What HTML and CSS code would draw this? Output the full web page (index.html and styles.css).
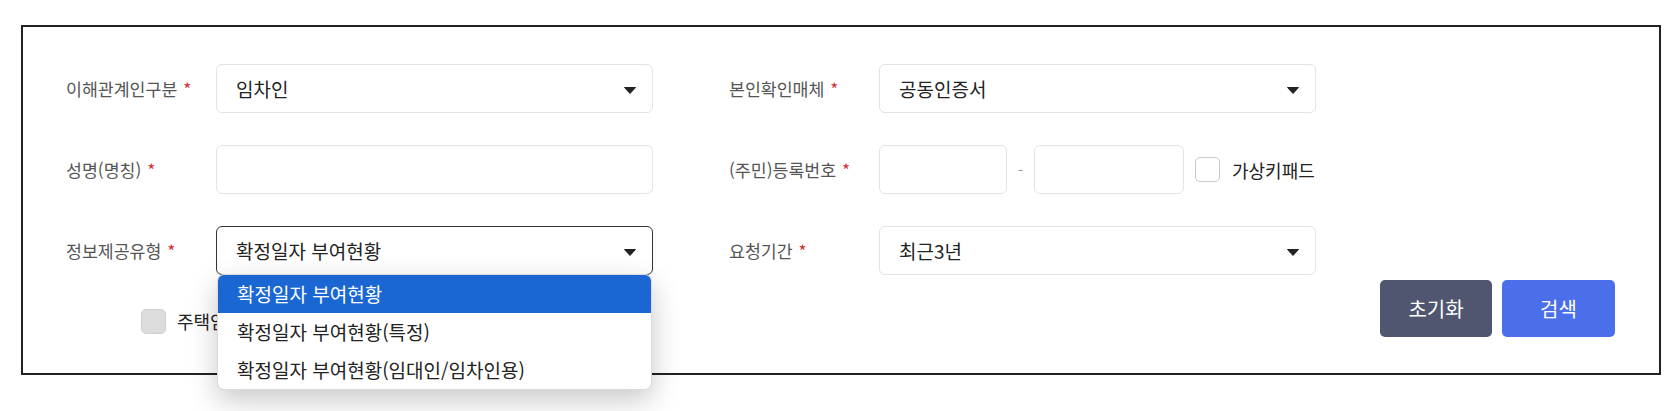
FILE: index.html
```html
<!DOCTYPE html>
<html lang="ko">
<head>
    <meta charset="UTF-8">
    <meta name="viewport" content="width=device-width, initial-scale=1.0">
    <title>확정일자 부여현황 조회</title>
    <link rel="stylesheet" href="styles.css">
</head>
<body>

<div class="search-box">
    <div class="form-grid">
        <div class="field">
            <span class="field-label">이해관계인구분 <em class="req">*</em></span>
            <div class="select">
                <span class="select-value">임차인</span>
                <svg class="caret" width="12" height="7" viewBox="0 0 12 7"><path d="M0.5 0.5 H11.5 L6 6.5 Z" fill="#222" stroke="#222" stroke-linejoin="round"/></svg>
            </div>
        </div>
        <div class="field">
            <span class="field-label">본인확인매체 <em class="req">*</em></span>
            <div class="select">
                <span class="select-value">공동인증서</span>
                <svg class="caret" width="12" height="7" viewBox="0 0 12 7"><path d="M0.5 0.5 H11.5 L6 6.5 Z" fill="#222" stroke="#222" stroke-linejoin="round"/></svg>
            </div>
        </div>

        <div class="field">
            <span class="field-label">성명(명칭) <em class="req">*</em></span>
            <input type="text" class="input">
        </div>
        <div class="field">
            <span class="field-label">(주민)등록번호 <em class="req">*</em></span>
            <div class="rrn">
                <input type="text" class="input rrn-front">
                <span class="dash">-</span>
                <input type="password" class="input rrn-back">
                <label class="check">
                    <span class="check-box"></span>
                    <span>가상키패드</span>
                </label>
            </div>
        </div>

        <div class="field">
            <span class="field-label">정보제공유형 <em class="req">*</em></span>
            <div class="select is-open">
                <span class="select-value">확정일자 부여현황</span>
                <svg class="caret" width="12" height="7" viewBox="0 0 12 7"><path d="M0.5 0.5 H11.5 L6 6.5 Z" fill="#222" stroke="#222" stroke-linejoin="round"/></svg>
                <ul class="options">
                    <li class="selected">확정일자 부여현황</li>
                    <li>확정일자 부여현황(특정)</li>
                    <li>확정일자 부여현황(임대인/임차인용)</li>
                </ul>
            </div>
        </div>
        <div class="field">
            <span class="field-label">요청기간 <em class="req">*</em></span>
            <div class="select">
                <span class="select-value">최근3년</span>
                <svg class="caret" width="12" height="7" viewBox="0 0 12 7"><path d="M0.5 0.5 H11.5 L6 6.5 Z" fill="#222" stroke="#222" stroke-linejoin="round"/></svg>
            </div>
        </div>
    </div>

    <div class="action-row">
        <label class="check check-disabled">
            <span class="check-box"></span>
            <span>주택임대차 신고정보 포함</span>
        </label>
        <div class="buttons">
            <button class="btn btn-reset">초기화</button>
            <button class="btn btn-search">검색</button>
        </div>
    </div>
</div>

</body>
</html>
```

FILE: styles.css
```css
html {
    background: #fff;
}
body {
    font-family: "Noto Sans CJK KR", "Noto Sans", sans-serif;
    color: #222;
    background: #fff;
    margin: 0;
    padding: 0;
    min-height: 100vh;
}
.search-box {
    box-sizing: border-box;
    width: 1640px;
    margin: 25px 0 0 21px;
    padding: 37px 44px 36px 43px;
    border: 2px solid #222;
}
.form-grid {
    display: grid;
    grid-template-columns: 587px 587px;
    column-gap: 76px;
    row-gap: 32px;
}
.field {
    display: flex;
    align-items: center;
}
.field-label {
    width: 150px;
    flex-shrink: 0;
    font-size: 17.3px;
    color: #555;
}
.req {
    font-style: normal;
    color: #d7282f;
    margin-left: 1px;
}
.select, .input {
    box-sizing: border-box;
    width: 437px;
    height: 49px;
    border: 1px solid #e3e3e3;
    border-radius: 6px;
    background: #fff;
    font-family: inherit;
    font-size: 19px;
    color: #222;
}
.input {
    padding: 0 16px;
    outline: none;
}
.select {
    position: relative;
    display: flex;
    align-items: center;
    justify-content: space-between;
    padding: 0 16px 0 19px;
}
.select.is-open {
    border-color: #333;
}
.caret {
    margin-top: 4px;
}
.options {
    position: absolute;
    top: 100%;
    left: 0;
    right: 0;
    margin: 0;
    padding: 0;
    list-style: none;
    background: #fff;
    border: 1px solid rgba(0, 0, 0, 0.14);
    border-radius: 7px;
    overflow: hidden;
    box-shadow: 0 10px 28px rgba(0, 0, 0, 0.22);
    z-index: 10;
}
.options li {
    height: 38px;
    line-height: 37px;
    padding: 0 19px;
    font-size: 19px;
    color: #222;
}
.options li.selected {
    background: #1a67d3;
    color: #fff;
}
.rrn {
    display: flex;
    align-items: center;
    flex-shrink: 0;
    white-space: nowrap;
}
.rrn-front {
    width: 128px;
}
.rrn-back {
    width: 150px;
}
.dash {
    width: 27px;
    text-align: center;
    color: #999;
    font-size: 15px;
}
.check {
    display: flex;
    align-items: center;
    gap: 12px;
    font-size: 18px;
    color: #222;
    white-space: nowrap;
}
.rrn .check {
    margin-left: 11px;
}
.check-box {
    box-sizing: border-box;
    flex-shrink: 0;
    width: 25px;
    height: 25px;
    border: 1px solid #c8c8c8;
    border-radius: 5px;
    background: #fff;
}
.check-disabled .check-box {
    background: #dcdcdc;
    border-color: #cfcfcf;
}
.action-row {
    display: flex;
    justify-content: space-between;
    align-items: flex-start;
    margin-top: 5px;
}
.action-row .check {
    margin: 28px 0 0 75px;
    gap: 11px;
}
.buttons {
    display: flex;
    gap: 10px;
}
.btn {
    width: 112px;
    height: 57px;
    border: none;
    border-radius: 5px;
    color: #fff;
    font-family: inherit;
    font-size: 20px;
    cursor: pointer;
}
.btn-reset {
    background-color: #505670;
}
.btn-search {
    width: 113px;
    background-color: #4b6feb;
}
```
